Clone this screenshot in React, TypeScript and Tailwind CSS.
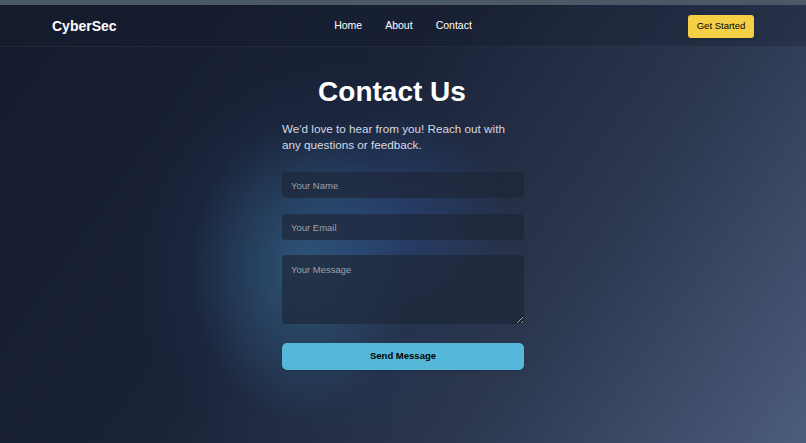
import React from "react";

export default function App() {
  return (
    <div
      className="w-[806px] h-[443px] overflow-hidden flex flex-col text-white bg-[radial-gradient(ellipse_110px_150px_at_300px_270px,rgba(56,110,150,0.55),transparent),radial-gradient(ellipse_120px_110px_at_390px_220px,rgba(45,80,150,0.45),transparent),radial-gradient(ellipse_190px_200px_at_320px_260px,rgba(40,75,120,0.35),transparent),linear-gradient(125deg,#151c2e_0%,#1a2237_40%,#2d3951_70%,#4c5c7c_100%)]"
      style={{ fontFamily: '"Liberation Sans", Arial, sans-serif' }}
    >
      <div className="h-[5px] bg-[#4b5966] shrink-0" />
      <header className="h-[42px] shrink-0 flex items-center justify-between px-[52px] pt-[1px] border-b border-white/5 bg-[#141a2b]/30">
        <div className="text-[14px] font-bold w-[66px]">CyberSec</div>
        <nav className="flex gap-[23px] text-[10.5px]">
          <span>Home</span>
          <span>About</span>
          <span>Contact</span>
        </nav>
        <button className="bg-[#f5cf45] text-black text-[9.5px] rounded-[3px] w-[66px] h-[23px] shadow">
          Get Started
        </button>
      </header>
      <main className="flex flex-col items-center pt-[28px]">
        <h1 className="text-[28px] font-bold leading-[34px] mr-[22px]">Contact Us</h1>
        <p className="w-[242px] text-[11.7px] leading-[16px] text-[#d6d9e0] mt-[12px]">
          We'd love to hear from you! Reach out with any questions or feedback.
        </p>
        <form className="w-[242px] flex flex-col mt-[19px]">
          <input
            placeholder="Your Name"
            className="h-[26px] rounded-[4px] bg-[#1e2638]/70 px-[9px] text-[9.5px] placeholder:text-[#9aa2b0] outline-none"
          />
          <input
            placeholder="Your Email"
            className="h-[26px] mt-[16px] rounded-[4px] bg-[#1e2638]/70 px-[9px] text-[9.5px] placeholder:text-[#9aa2b0] outline-none"
          />
          <textarea
            placeholder="Your Message"
            className="h-[69px] mt-[15px] rounded-[4px] bg-[#1e2638]/70 px-[9px] py-[8px] text-[9.5px] placeholder:text-[#9aa2b0] outline-none"
          />
          <button
            type="button"
            className="h-[27px] mt-[19px] rounded-[5px] bg-[#55b8d8] text-black text-[9.5px] font-bold shadow"
          >
            Send Message
          </button>
        </form>
      </main>
    </div>
  );
}
